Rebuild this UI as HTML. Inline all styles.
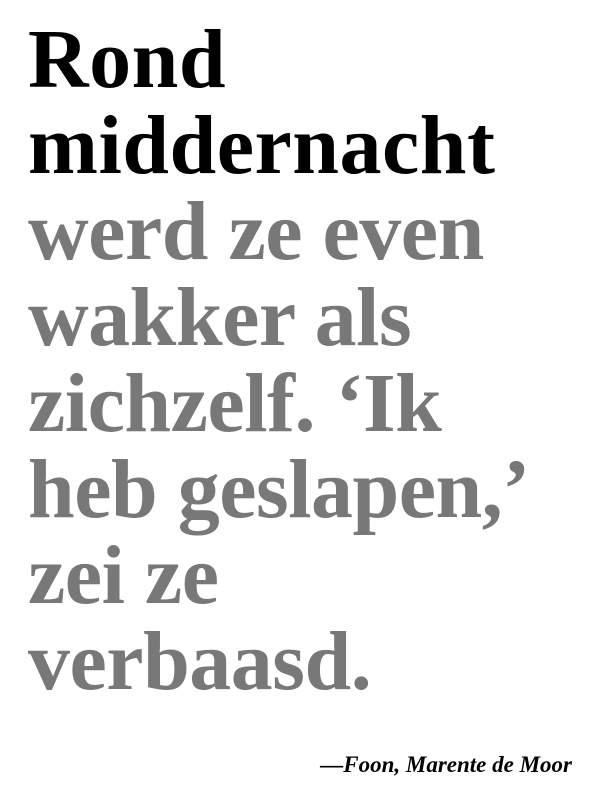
<!DOCTYPE html>
<html><head><meta charset="utf-8"><style>
html,body{margin:0;padding:0;background:#fff;width:600px;height:800px;overflow:hidden;}
.q{position:absolute;left:28px;top:17px;font-family:"Liberation Serif",serif;font-weight:bold;font-size:84px;line-height:86px;color:#787878;white-space:nowrap;letter-spacing:-0.5px;}
.q .b{color:#000;letter-spacing:0.5px;}
.a{position:absolute;right:28px;top:752px;font-family:"Liberation Serif",serif;font-style:italic;font-weight:bold;font-size:23px;color:#000;}
</style></head><body>
<div class="q"><span class="b">Rond<br>middernacht</span><br>werd ze even<br>wakker als<br>zichzelf. ‘Ik<br>heb geslapen,’<br>zei ze<br>verbaasd.</div>
<div class="a">—Foon, Marente de Moor</div>
</body></html>
